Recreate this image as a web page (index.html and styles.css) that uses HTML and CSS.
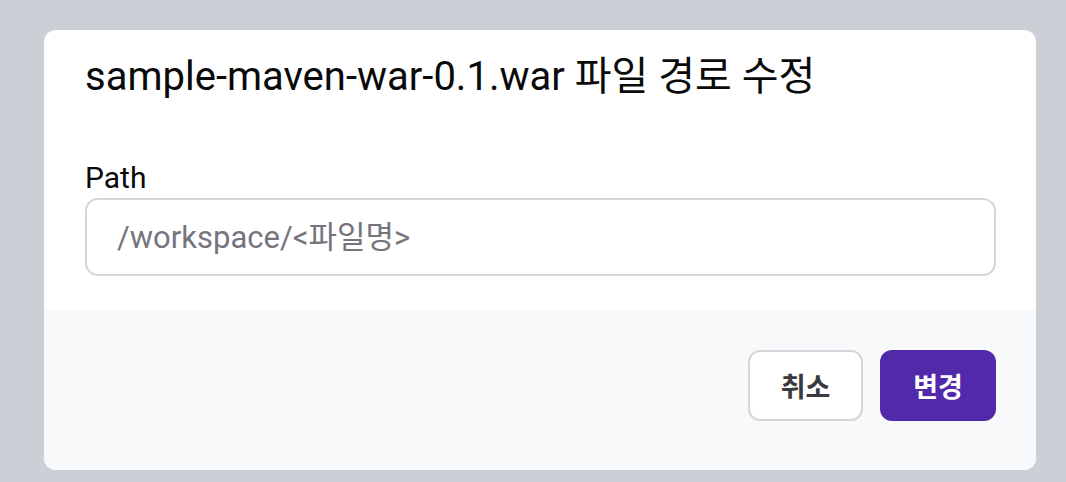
FILE: index.html
```html
<!DOCTYPE html>
<html lang="ko">
<head>
<meta charset="utf-8">
<title>파일 경로 수정</title>
<link rel="stylesheet" href="styles.css">
</head>
<body>
<div class="backdrop">
  <div class="modal">
    <div class="modal-body">
      <h2 class="modal-title">sample-maven-war-0.1.war 파일 경로 수정</h2>
      <label class="field-label" for="path">Path</label>
      <input class="field-input" id="path" type="text" placeholder="/workspace/<파일명>">
    </div>
    <div class="modal-footer">
      <button class="btn btn-cancel" type="button">취소</button>
      <button class="btn btn-primary" type="button">변경</button>
    </div>
  </div>
</div>
</body>
</html>
```

FILE: styles.css
```css
* { box-sizing: border-box; }
html, body { margin: 0; padding: 0; }
body {
  width: 1066px;
  height: 482px;
  background: #cbcfd6;
  font-family: Roboto, "Noto Sans CJK KR", sans-serif;
  overflow: hidden;
}
.backdrop {
  padding: 30px 30px 0 44px;
}
.modal {
  width: 992px;
  height: 440px;
  background: #ffffff;
  border-radius: 12px;
  overflow: hidden;
  display: flex;
  flex-direction: column;
}
.modal-body {
  padding: 23px 40px 0 41px;
  height: 280px;
  display: flex;
  flex-direction: column;
}
.modal-title {
  margin: 0;
  font-size: 40px;
  line-height: 48px;
  font-weight: 400;
  color: #0a0a0a;
  white-space: nowrap;
}
.field-label {
  margin-top: 56px;
  font-size: 30px;
  line-height: 41px;
  color: #0a0a0a;
}
.field-input {
  width: 911px;
  height: 78px;
  border: 2px solid #d6d6da;
  border-radius: 13px;
  padding: 0 30px;
  font-family: Roboto, "Noto Sans CJK KR", sans-serif;
  font-size: 31px;
  color: #222;
  background: #fff;
  outline: none;
}
.field-input::placeholder {
  color: #75757d;
}
.modal-footer {
  flex: 1;
  background: #f8f9fb;
  display: flex;
  justify-content: flex-end;
  align-items: flex-start;
  gap: 17px;
  padding: 40px 40px 0 0;
}
.btn {
  height: 71px;
  border-radius: 12px;
  font-family: "Noto Sans CJK KR", Roboto, sans-serif;
  font-size: 27px;
  font-weight: 700;
  cursor: pointer;
}
.btn-cancel {
  width: 115px;
  background: #ffffff;
  border: 2px solid #d6d6da;
  color: #3a3a40;
}
.btn-primary {
  width: 116px;
  background: #5329ab;
  border: none;
  color: #ffffff;
}
```
